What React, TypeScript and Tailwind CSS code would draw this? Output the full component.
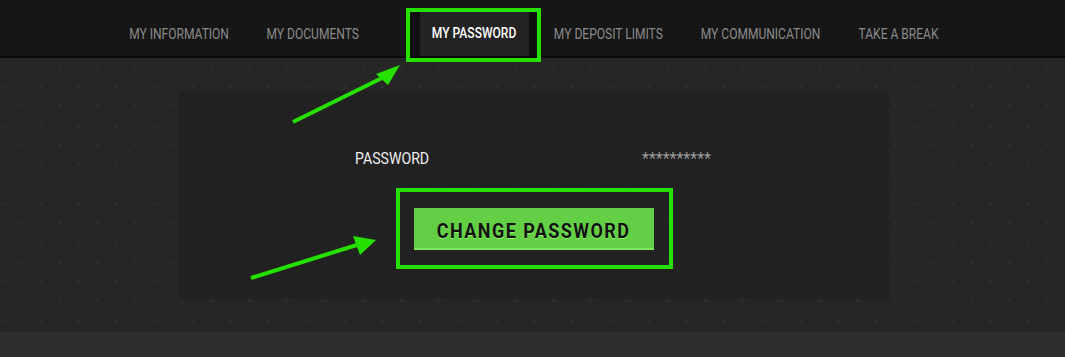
const navItems = [
  { label: 'MY INFORMATION', w: 'w-[137px]' },
  { label: 'MY DOCUMENTS', w: 'w-[131px]' },
  { label: 'MY PASSWORD', w: 'w-[127px]', active: true },
  { label: 'MY DEPOSIT LIMITS', w: 'w-[142px]' },
  { label: 'MY COMMUNICATION', w: 'w-[162px]' },
  { label: 'TAKE A BREAK', w: 'w-[113px]' },
];

const dots =
  '[background-image:radial-gradient(circle_at_21.5px_28px,#2f2f2f_1.2px,transparent_1.8px),radial-gradient(circle_at_2.5px_9px,#2f2f2f_1.2px,transparent_1.8px)] [background-size:38px_39px] bg-fixed';
const panelDots =
  '[background-image:radial-gradient(circle_at_21.5px_28px,#262626_1.2px,transparent_1.8px),radial-gradient(circle_at_2.5px_9px,#262626_1.2px,transparent_1.8px)] [background-size:38px_39px] bg-fixed';

function NavItem({ label, w, active }: { label: string; w: string; active?: boolean }) {
  if (active) {
    return (
      <div className={`ml-[32px] mt-[10px] flex ${w} items-center justify-center border-x-[9px] border-[#0f0f0f] bg-[#232323] pt-[1px]`}>
        <span className="inline-block scale-x-[0.86] whitespace-nowrap text-[14px] font-medium text-white">{label}</span>
      </div>
    );
  }
  return (
    <div className={`flex h-full ${w} items-center justify-center pt-[12px]`}>
      <span className="inline-block scale-x-[0.86] whitespace-nowrap text-[14px] text-[#8a8a8a]">{label}</span>
    </div>
  );
}

export default function App() {
  return (
    <div className="relative flex h-[357px] w-full flex-col overflow-hidden bg-[#2e2e2e] font-['Roboto',sans-serif]">
      <nav className="flex h-[58px] shrink-0 justify-center border-b-2 border-[#0b0b0b] bg-[#161616]">
        {navItems.map((item) => (
          <NavItem key={item.label} {...item} />
        ))}
      </nav>

      <main className={`h-[274px] shrink-0 bg-[#262626] py-[33px] ${dots}`}>
        <section className={`ml-[179px] h-[208px] w-[710px] bg-[#212121] pt-[58px] ${panelDots}`}>
          <div className="flex h-[20px] items-center pl-[176px]">
            <div className="w-[287px]">
              <span className="inline-block origin-left scale-x-[0.83] text-[17px] leading-[20px] text-[#eeeeee]">PASSWORD</span>
            </div>
            <span className="text-[16px] leading-[20px] text-[#9a9a9a]">**********</span>
          </div>
          <button className="mx-auto mt-[39px] flex h-[42px] w-[240px] items-center justify-center border-b-2 border-[#7be85b] bg-[#62cf45] pt-[5px]">
            <span className="inline-block scale-x-[0.9] whitespace-nowrap text-[20px] font-bold tracking-[1.6px] text-[#111111] [text-shadow:0_1px_0_#8ff06e]">
              CHANGE PASSWORD
            </span>
          </button>
        </section>
      </main>

      <div className="flex-1 bg-[#2e2e2e]" />

      {/* annotation overlay */}
      <svg className="pointer-events-none absolute left-0 top-0" width="1065" height="357" viewBox="0 0 1065 357">
        <rect x="408" y="10" width="131" height="50" fill="none" stroke="#25e000" strokeWidth="4" />
        <rect x="398" y="190" width="273" height="77" fill="none" stroke="#25e000" strokeWidth="4" />
        <line x1="293" y1="122" x2="384" y2="77" stroke="#25e000" strokeWidth="4" />
        <polygon points="400,65 376,74 388,85" fill="#25e000" />
        <line x1="251" y1="278" x2="360" y2="244" stroke="#25e000" strokeWidth="4" />
        <polygon points="376,240 353,236 360,255" fill="#25e000" />
      </svg>
    </div>
  );
}
